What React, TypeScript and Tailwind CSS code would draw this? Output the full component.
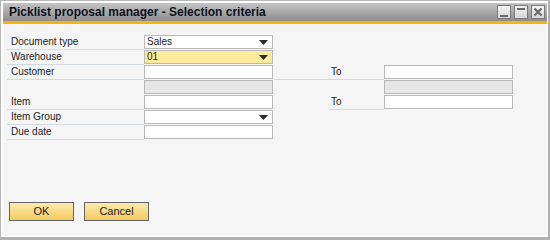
import React from "react";

const font = { fontFamily: '"Liberation Sans", Arial, sans-serif' };

function Arrow() {
  return (
    <svg width="9" height="5" viewBox="0 0 9 5" className="absolute right-[4px] top-[4px]">
      <polygon points="0,0 9,0 4.5,5" fill="#2b2b2b" />
    </svg>
  );
}

function Field({
  value,
  kind = "input",
  bg = "bg-white",
}: {
  value?: string;
  kind?: "input" | "select";
  bg?: string;
}) {
  return (
    <div
      className={`relative w-[129px] h-[14px] border border-[#b9b9b9] ${bg} text-[10px] leading-[12px] pl-[2px] text-[#1b1b1b]`}
    >
      {value}
      {kind === "select" && <Arrow />}
    </div>
  );
}

function Label({ text }: { text: string }) {
  return (
    <div className="w-[137px] h-[15px] border-b border-[#d3d9e1] pl-[4px] text-[10px] leading-[14px] text-[#1b1b1b]">
      {text}
    </div>
  );
}

function WinBtn({ children }: { children: React.ReactNode }) {
  return (
    <div className="w-[14px] h-[14px] border border-[#7a7a7a] bg-gradient-to-b from-[#f4f4f4] to-[#d6d6d6] flex items-center justify-center">
      {children}
    </div>
  );
}

function Btn({ text }: { text: string }) {
  return (
    <div className="w-[65px] h-[19px] border border-[#646464] bg-gradient-to-b from-[#fbe9ad] to-[#f2cd5c] flex items-center justify-center text-[11px] text-[#1b1b1b]">
      {text}
    </div>
  );
}

export default function App() {
  return (
    <div
      style={font}
      className="w-[550px] h-[240px] bg-white border-l border-t border-[#b8b8b8] border-r-2 border-b-[3px] border-r-[#b0b0b0] border-b-[#b0b0b0] pl-[2px] pt-[2px] pr-px pb-px flex flex-col"
    >
      <div className="h-[18px] bg-gradient-to-b from-[#c4c4c4] to-[#8e8e8e] flex items-center pl-[6px] pr-[2px]">
        <div className="text-[12px] font-bold text-[#0c1020] flex-1 leading-[14px]">
          Picklist proposal manager - Selection criteria
        </div>
        <div className="flex gap-[3px]">
          <WinBtn>
            <div className="w-[8px] h-[2px] bg-[#6a6a6a] mt-[8px]" />
          </WinBtn>
          <WinBtn>
            <div className="w-[8px] h-[2px] bg-[#6a6a6a] mb-[7px]" />
          </WinBtn>
          <WinBtn>
            <svg width="10" height="10" viewBox="0 0 10 10">
              <path d="M1.5 1.5 L8.5 8.5 M8.5 1.5 L1.5 8.5" stroke="#6a6a6a" strokeWidth="2.2" />
            </svg>
          </WinBtn>
        </div>
      </div>
      <div className="h-[3px] bg-[#f5b410]" />
      <div className="flex-1 bg-[#f5f5f5] pl-[4px] pt-[11px] flex flex-col">
        <div className="flex h-[15px]">
          <Label text="Document type" />
          <Field value="Sales" kind="select" />
        </div>
        <div className="flex h-[15px]">
          <Label text="Warehouse" />
          <Field value="01" kind="select" bg="bg-[#fdea9d]" />
        </div>
        <div className="flex h-[15px]">
          <Label text="Customer" />
          <Field />
          <div className="ml-[2px] w-[109px] h-[15px] border-b border-[#d3d9e1] pl-[56px] text-[10px] leading-[14px] text-[#1b1b1b]">
            To
          </div>
          <Field />
        </div>
        <div className="flex h-[15px]">
          <div className="w-[137px]" />
          <Field bg="bg-[#e6e6e6]" />
          <div className="w-[111px]" />
          <Field bg="bg-[#e6e6e6]" />
        </div>
        <div className="flex h-[15px]">
          <Label text="Item" />
          <Field />
          <div className="ml-[56px] w-[55px] h-[15px] border-b border-[#d3d9e1] pl-[2px] text-[10px] leading-[14px] text-[#1b1b1b]">
            To
          </div>
          <Field />
        </div>
        <div className="flex h-[15px]">
          <Label text="Item Group" />
          <Field kind="select" />
        </div>
        <div className="flex h-[15px]">
          <Label text="Due date" />
          <Field />
        </div>
        <div className="flex gap-[10px] mt-[62px] pl-[2px]">
          <Btn text="OK" />
          <Btn text="Cancel" />
        </div>
      </div>
    </div>
  );
}
